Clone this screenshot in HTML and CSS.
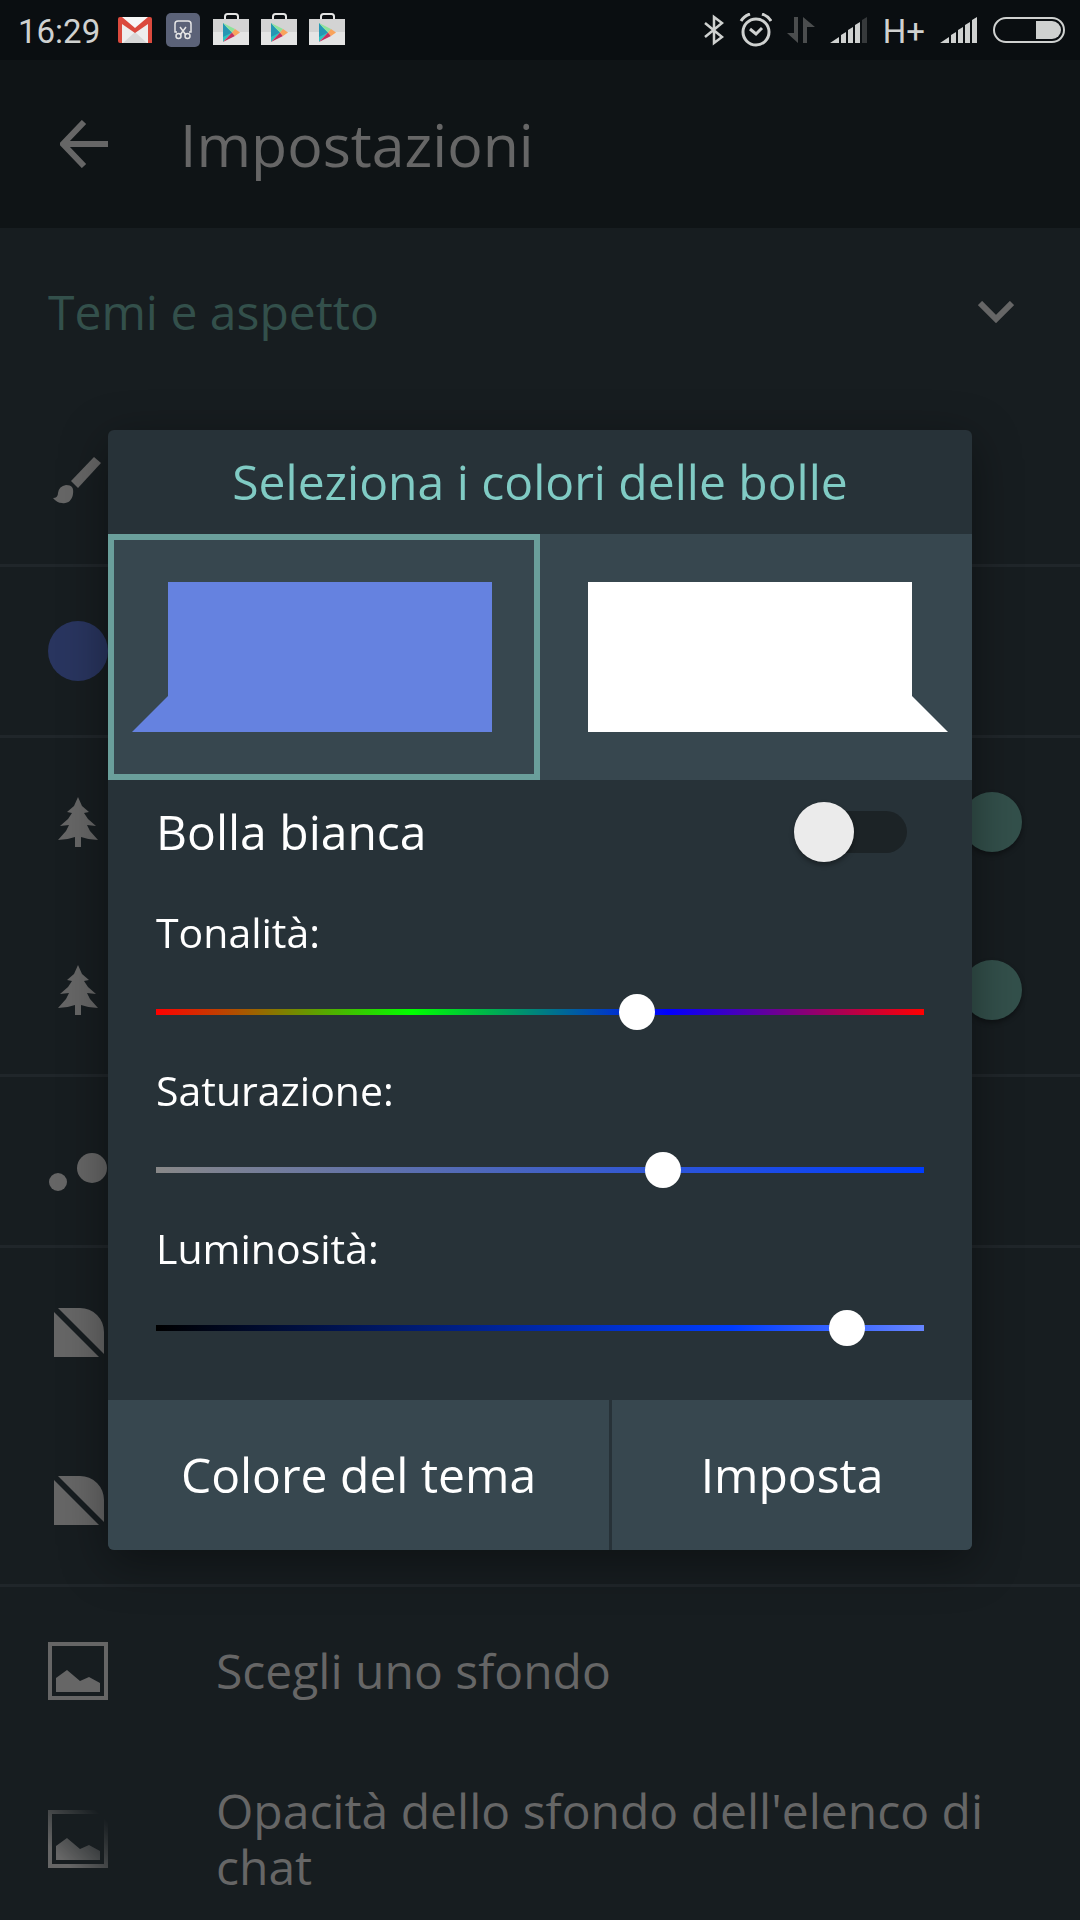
FILE: index.html
```html
<!DOCTYPE html>
<html lang="it">
<head>
    <meta charset="UTF-8">
    <meta name="viewport" content="width=device-width, initial-scale=1">
    <title>Impostazioni</title>
    <link rel="stylesheet" href="styles.css">
</head>
<body>

<!-- shared shapes -->
<svg class="defs" width="0" height="0">
    <defs>
        <symbol id="play" viewBox="0 0 36 36">
            <path d="M12 8V4.500Q12 2 14.500 2H22.500Q25 2 25 4.500V8" fill="none" stroke="#e4e4e4" stroke-width="2"/>
            <path d="M0 7H36V33H0Z" fill="#e4e4e4"/>
            <path d="M0 7H36V20H0Z" fill="#d3d3d3"/>
            <path d="M10 11V30L19 20.500Z" fill="#2bc4c0"/>
            <path d="M10 11L14 16L19 20.500L10 25Z" fill="#2596b4"/>
            <path d="M10 11L22 17L19 20.500Z" fill="#8de29a"/>
            <path d="M10 30L19 20.500L22 24Z" fill="#c5325f"/>
            <path d="M22 17L27 20.500L22 24L19 20.500Z" fill="#f9a35b"/>
        </symbol>
        <symbol id="tree" viewBox="0 0 40 50">
            <path d="M20 0L24 9L31 15L26 16L30 22L38 29L29 28L32 34L40 43Q31 43 23 40V50H17V40Q9 43 0 43L8 34L11 28L2 29L10 22L14 16L9 15L16 9Z"/>
        </symbol>
        <symbol id="corner" viewBox="0 0 50 50">
            <path d="M0 4L46 50H0Z"/>
            <path d="M4 0H26A24 24 0 0 1 50 24V46Z"/>
        </symbol>
        <symbol id="picture" viewBox="0 0 60 58">
            <path d="M2 2H58V56H2Z" fill="none" stroke-width="4"/>
            <path d="M8 36L19 28L32 39L41 35L52 41V50H8Z" stroke="none"/>
        </symbol>
    </defs>
</svg>

<div class="statusbar">
    <span class="clock">16:29</span>
    <div class="notifications">
        <svg width="36" height="36" viewBox="0 0 36 36">
            <path d="M3 5H33V31H3Z" fill="#eee"/>
            <path d="M6 31L18 20L30 31Z" fill="#d8d8d8"/>
            <path d="M5 5H31L18 16Z" fill="#f7f7f7"/>
            <path d="M1 7Q1 5 3 5L5 5L18 16L31 5H33Q35 5 35 7V31H31V12L18 21L5 12V31H3Q1 31 1 29Z" fill="#db4a3e"/>
        </svg>
        <svg width="36" height="36" viewBox="0 0 36 36">
            <rect x="1" y="1" width="34" height="34" rx="5" fill="#5b6278"/>
            <g fill="none" stroke="#e6e6e6" stroke-width="1.500">
                <path d="M12 20H10V12Q10 9 13 9H23Q26 9 26 12V20H24"/>
                <path d="M15 15L21 23M21 15L15 23"/>
                <circle cx="13.500" cy="24" r="2.500"/>
                <circle cx="22.500" cy="24" r="2.500"/>
            </g>
        </svg>
        <svg width="36" height="36"><use href="#play"/></svg>
        <svg width="36" height="36"><use href="#play"/></svg>
        <svg width="36" height="36"><use href="#play"/></svg>
    </div>
    <div class="system">
        <svg width="21" height="32" viewBox="0 0 21 32">
            <path d="M2 9L19 23L11 29V3L19 9L2 23" fill="none" stroke="#cfd1d0" stroke-width="2.500"/>
        </svg>
        <svg width="33" height="34" viewBox="-1 0 33 34">
            <g fill="none" stroke="#cfd1d0" stroke-width="3">
                <circle cx="16" cy="19" r="13"/>
                <path d="M10 16L16 21L22 15"/>
                <path d="M1 8Q4 3 10 1M31 8Q28 3 22 1"/>
            </g>
        </svg>
        <svg width="28" height="28" viewBox="0 0 28 28">
            <path d="M7 1H11V27L0 17H7ZM16 1L28 11H20V27H16Z" fill="#4b4d4e"/>
        </svg>
        <svg width="38" height="28" viewBox="0 0 38 28">
            <path d="M0 27L9 21V27ZM11 19L16 16V27H11ZM18 14L23 11V27H18ZM25 9L30 6V27H25Z" fill="#cfd1d0"/>
            <path d="M32 4L37 1V27H32Z" fill="#36393b"/>
        </svg>
        <span>H+</span>
        <svg width="38" height="28" viewBox="0 0 38 28">
            <path d="M0 27L9 21V27ZM11 19L16 16V27H11ZM18 14L23 11V27H18ZM25 9L30 6V27H25ZM32 4L37 1V27H32Z" fill="#cfd1d0"/>
        </svg>
        <svg width="72" height="26" viewBox="0 0 72 26">
            <rect x="1" y="1" width="70" height="24" rx="12" fill="none" stroke="#cfd1d0" stroke-width="2"/>
            <path d="M43 4H59A9 9 0 0 1 59 22H43Z" fill="#cfd1d0"/>
        </svg>
    </div>
</div>

<header class="toolbar">
    <button class="back" aria-label="Indietro">
        <svg width="48" height="48" viewBox="0 0 48 48">
            <path d="M24 2L3 24L24 46M3 24H48" fill="none" stroke="#666" stroke-width="6"/>
        </svg>
    </button>
    <h1>Impostazioni</h1>
</header>

<main class="settings">
    <div class="row section">
        <h2>Temi e aspetto</h2>
        <svg width="36" height="22" viewBox="0 0 36 22">
            <path d="M2 2L18 18L34 2" fill="none" stroke="#666" stroke-width="6"/>
        </svg>
    </div>

    <div class="row line">
        <svg class="icon" viewBox="0 0 60 60">
            <path d="M46 7L53 13L30 38L23 31Z"/>
            <path d="M18 35C24 35 26 38 25 44C24 51 19 54 14 53Q9 53 5 48Q10 48 10 43Q11 36 18 35Z"/>
        </svg>
    </div>
    <div class="row line">
        <svg class="icon" viewBox="0 0 60 60"><circle cx="30" cy="30" r="30" fill="#29355f"/></svg>
    </div>
    <div class="row">
        <svg class="icon small" viewBox="0 0 40 50"><use href="#tree"/></svg>
        <input type="checkbox" class="switch dim" aria-label="Tema notturno" checked>
    </div>
    <div class="row line">
        <svg class="icon small" viewBox="0 0 40 50"><use href="#tree"/></svg>
        <input type="checkbox" class="switch dim" aria-label="Tema automatico" checked>
    </div>
    <div class="row line">
        <svg class="icon" viewBox="0 0 60 60">
            <circle cx="10" cy="51" r="9"/>
            <circle cx="44" cy="37" r="15"/>
        </svg>
    </div>
    <div class="row">
        <svg class="icon small" viewBox="-1 -1 50 50"><use href="#corner" width="50" height="50"/></svg>
    </div>
    <div class="row line">
        <svg class="icon small" viewBox="-1 -1 50 50"><use href="#corner" width="50" height="50"/></svg>
    </div>
    <div class="row">
        <svg class="icon" viewBox="0 0 60 58" stroke="#666"><use href="#picture"/></svg>
        <p>Scegli uno sfondo</p>
    </div>
    <div class="row">
        <svg class="icon faded" viewBox="0 0 60 58" stroke="#666"><use href="#picture"/></svg>
        <p>Opacità dello sfondo dell'elenco di chat</p>
    </div>
</main>

<div class="overlay">
    <form class="dialog" role="dialog" aria-labelledby="dialogTitle">
        <h2 id="dialogTitle">Seleziona i colori delle bolle</h2>

        <div class="bubbles">
            <button type="button" class="bubble selected" aria-label="Bolla in arrivo">
                <svg viewBox="0 0 432 246"><path d="M60 48H384V198H24L60 162Z" fill="#6582e0"/></svg>
            </button>
            <button type="button" class="bubble" aria-label="Bolla in uscita">
                <svg viewBox="0 0 432 246"><path d="M48 48H372V162L408 198H48Z" fill="#fff"/></svg>
            </button>
        </div>

        <div class="controls">
            <div class="toggle">
                <label for="white">Bolla bianca</label>
                <input type="checkbox" class="switch" id="white">
            </div>
            <div class="slider">
                <label for="hue">Tonalità:</label>
                <input type="range" class="hue" id="hue" min="0" max="1000" value="633">
            </div>
            <div class="slider">
                <label for="saturation">Saturazione:</label>
                <input type="range" class="saturation" id="saturation" min="0" max="1000" value="668">
            </div>
            <div class="slider">
                <label for="brightness">Luminosità:</label>
                <input type="range" class="brightness" id="brightness" min="0" max="1000" value="919">
            </div>
        </div>

        <div class="actions">
            <button type="button">Colore del tema</button>
            <button type="submit">Imposta</button>
        </div>
    </form>
</div>

</body>
</html>
```
FILE: styles.css
```css
* {
    box-sizing: border-box;
}

body {
    margin: 0;
    min-height: 100vh;
    overflow: hidden;
    background: #171d20;
    color: #666;
    font-family: "Open Sans", Lato, sans-serif;
    font-size: 48px;
    line-height: 56px;
}

h1, h2, p {
    margin: 0;
    font-weight: normal;
}

h2 {
    font-size: 48px;
}

button {
    padding: 0;
    border: none;
    background: none;
    color: inherit;
    font: inherit;
    cursor: pointer;
}

svg {
    display: block;
    flex: none;
}

.defs {
    position: absolute;
}

/* status bar */
.statusbar {
    display: flex;
    align-items: center;
    height: 60px;
    padding: 0 15px 0 18px;
    background: #0a0e11;
    color: #cfd1d0;
    font-family: Roboto, sans-serif;
    font-size: 33px;
    line-height: 40px;
}

.statusbar span {
    padding-top: 3px;
}

.clock {
    width: 99px;
}

.notifications {
    display: flex;
    gap: 12px;
}

.system {
    display: flex;
    align-items: center;
    gap: 15px;
    margin-left: auto;
}

/* toolbar */
.toolbar {
    display: flex;
    align-items: center;
    gap: 72px;
    height: 168px;
    padding: 0 60px;
    background: #0f1416;
}

.toolbar h1 {
    font-size: 59px;
    line-height: 72px;
}

/* settings list */
.row {
    display: flex;
    align-items: center;
    gap: 108px;
    height: 168px;
    padding: 0 48px;
}

.row.line {
    box-sizing: content-box;
    border-bottom: 3px solid #20262a;
}

.section {
    justify-content: space-between;
    padding-right: 66px;
    color: #33504b;
}

.icon {
    width: 60px;
    height: 60px;
    fill: #666;
}

.icon.small {
    height: 50px;
}

.icon.faded {
    -webkit-mask-image: linear-gradient(to top right, #000 20%, transparent 90%);
    mask-image: linear-gradient(to top right, #000 20%, transparent 90%);
}

/* switches */
.switch {
    appearance: none;
    display: grid;
    align-items: center;
    flex: none;
    width: 113px;
    height: 60px;
    margin: 0;
    cursor: pointer;
}

.switch::before,
.switch::after {
    content: "";
    grid-area: 1 / 1;
}

.switch::before {
    height: 42px;
    margin-left: 15px;
    border-radius: 21px;
    background: #1c2326;
}

.switch::after {
    width: 60px;
    height: 60px;
    border-radius: 50%;
    background: #ebebeb;
    box-shadow: 0 3px 5px rgba(0, 0, 0, .35);
}

.switch:checked::after {
    justify-self: end;
}

.switch.dim {
    margin-left: auto;
    margin-right: 10px;
}

.switch.dim::after {
    background: #33504b;
}

/* dialog */
.overlay {
    position: fixed;
    inset: 60px 0 0;
    display: flex;
    align-items: center;
    justify-content: center;
}

.dialog {
    width: 80%;
    overflow: hidden;
    border-radius: 6px;
    background: #273238;
    box-shadow: 0 12px 48px rgba(0, 0, 0, .4);
    color: #fff;
}

.dialog h2 {
    padding: 24px 48px;
    color: #80cbc4;
    text-align: center;
}

.bubbles {
    display: grid;
    grid-template-columns: 1fr 1fr;
    background: #37474f;
}

.bubble svg {
    width: 100%;
}

.bubble.selected {
    outline: 6px solid #6a9f9b;
    outline-offset: -6px;
}

.controls {
    padding: 0 48px 42px;
}

.toggle {
    display: flex;
    align-items: center;
    justify-content: space-between;
    height: 104px;
    padding-right: 17px;
}

.slider {
    height: 158px;
    padding-top: 22px;
}

.slider label {
    display: block;
    font-size: 41px;
    line-height: 52px;
}

.slider input {
    appearance: none;
    display: block;
    width: 100%;
    height: 36px;
    margin: 36px 0 0;
    background: center / 100% 6px no-repeat;
    cursor: pointer;
}

.slider input::-webkit-slider-thumb {
    appearance: none;
    width: 36px;
    height: 36px;
    border: none;
    border-radius: 50%;
    background: #fff;
}

.slider .hue {
    background-image: linear-gradient(to right, #f00, #0f0, #00f, #f00);
}

.slider .saturation {
    background-image: linear-gradient(to right, #888, #003cff);
}

.slider .brightness {
    background-image: linear-gradient(to right, #000, #003cff 75%, #6685ff);
}

.actions {
    display: grid;
    grid-template-columns: 501fr 360fr;
    gap: 3px;
}

.actions button {
    height: 150px;
    background: #37474f;
}
```
